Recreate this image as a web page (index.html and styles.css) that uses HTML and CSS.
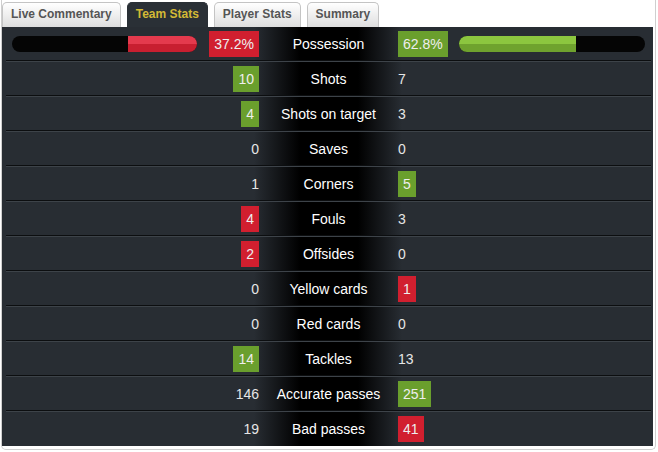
FILE: index.html
```html
<!DOCTYPE html>
<html>
<head>
<meta charset="utf-8">
<link rel="stylesheet" href="styles.css">
</head>
<body>
<div class="wrap">
  <div class="tabs">
    <div class="tab">Live Commentary</div>
    <div class="tab active">Team Stats</div>
    <div class="tab">Player Stats</div>
    <div class="tab">Summary</div>
  </div>
  <div class="panel">
    <div class="row">
      <div class="side left">
        <div class="bar"><div class="fill red-fill" style="width:37.2%"></div></div>
        <span class="badge red">37.2%</span>
      </div>
      <div class="label">Possession</div>
      <div class="side right">
        <span class="badge green">62.8%</span>
        <div class="bar"><div class="fill green-fill" style="width:62.8%"></div></div>
      </div>
    </div>
    <div class="row"><div class="side left"><span class="badge green">10</span></div><div class="label">Shots</div><div class="side right"><span class="val">7</span></div></div>
    <div class="row"><div class="side left"><span class="badge green">4</span></div><div class="label">Shots on target</div><div class="side right"><span class="val">3</span></div></div>
    <div class="row"><div class="side left"><span class="val">0</span></div><div class="label">Saves</div><div class="side right"><span class="val">0</span></div></div>
    <div class="row"><div class="side left"><span class="val">1</span></div><div class="label">Corners</div><div class="side right"><span class="badge green">5</span></div></div>
    <div class="row"><div class="side left"><span class="badge red">4</span></div><div class="label">Fouls</div><div class="side right"><span class="val">3</span></div></div>
    <div class="row"><div class="side left"><span class="badge red">2</span></div><div class="label">Offsides</div><div class="side right"><span class="val">0</span></div></div>
    <div class="row"><div class="side left"><span class="val">0</span></div><div class="label">Yellow cards</div><div class="side right"><span class="badge red">1</span></div></div>
    <div class="row"><div class="side left"><span class="val">0</span></div><div class="label">Red cards</div><div class="side right"><span class="val">0</span></div></div>
    <div class="row"><div class="side left"><span class="badge green">14</span></div><div class="label">Tackles</div><div class="side right"><span class="val">13</span></div></div>
    <div class="row"><div class="side left"><span class="val">146</span></div><div class="label">Accurate passes</div><div class="side right"><span class="badge green">251</span></div></div>
    <div class="row last"><div class="side left"><span class="val">19</span></div><div class="label">Bad passes</div><div class="side right"><span class="badge red">41</span></div></div>
  </div>
</div>
</body>
</html>
```
FILE: styles.css
```css
html, body {
  margin: 0;
  padding: 0;
  background: #fff;
}
body {
  font-family: "Liberation Sans", Arial, sans-serif;
}
.wrap {
  width: 651px;
  margin-left: 1px;
  border: 1px solid #cfcfcf;
  border-top: none;
  border-radius: 0 0 5px 5px;
  padding: 0 2px 3px 0;
}
.tabs {
  display: flex;
  gap: 6px;
  padding-top: 1px;
  height: 26px;
  align-items: flex-end;
}
.tab {
  box-sizing: border-box;
  height: 25px;
  padding: 0 8px;
  border: 1px solid #c4c4c4;
  border-bottom: none;
  border-radius: 5px 5px 0 0;
  background: linear-gradient(#ffffff, #dedede);
  color: #555;
  font-size: 12px;
  font-weight: bold;
  line-height: 23px;
}
.tab.active {
  background: #2a3036;
  border-color: #2a3036;
  color: #d3b935;
}
.panel {
  background: linear-gradient(90deg, #282d33 0, #282d33 252px, #000 298px, #000 356px, #282d33 400px, #282d33 100%);
}
.row {
  display: grid;
  grid-template-columns: 253px 139px 1fr;
  height: 33px;
  align-items: center;
  border-bottom: 1px solid #0c0e10;
  box-shadow: 0 1px 0 #3d4349;
  margin: 0 2px 1px 4px;
}
.row.last {
  border-bottom: none;
  box-shadow: none;
  height: 34px;
  margin-bottom: 0;
}
.side {
  display: flex;
  align-items: center;
}
.left {
  justify-content: flex-end;
  gap: 12px;
}
.right {
  justify-content: flex-start;
  gap: 11px;
}
.label {
  text-align: center;
  color: #fff;
  font-size: 14px;
}
.val {
  color: #e6e6e6;
  font-size: 14px;
}
.badge {
  display: inline-block;
  height: 26px;
  line-height: 26px;
  padding: 0 5px;
  color: #eee;
  font-size: 14px;
}
.badge.red { background: #d11f2f; }
.badge.green { background: #6a9f2d; }
.bar {
  width: 185px;
  height: 16px;
  border-radius: 8px;
  background: #050505;
  display: flex;
  overflow: hidden;
}
.left .bar { justify-content: flex-end; }
.right .bar { width: 186px; }
.fill { height: 100%; }
.red-fill { background: linear-gradient(#e43a4d 0, #e43a4d 50%, #c81f30 50%, #c81f30 100%); }
.green-fill { background: linear-gradient(#8cc63f 0, #8cc63f 50%, #6fa22e 50%, #6fa22e 100%); }
```
